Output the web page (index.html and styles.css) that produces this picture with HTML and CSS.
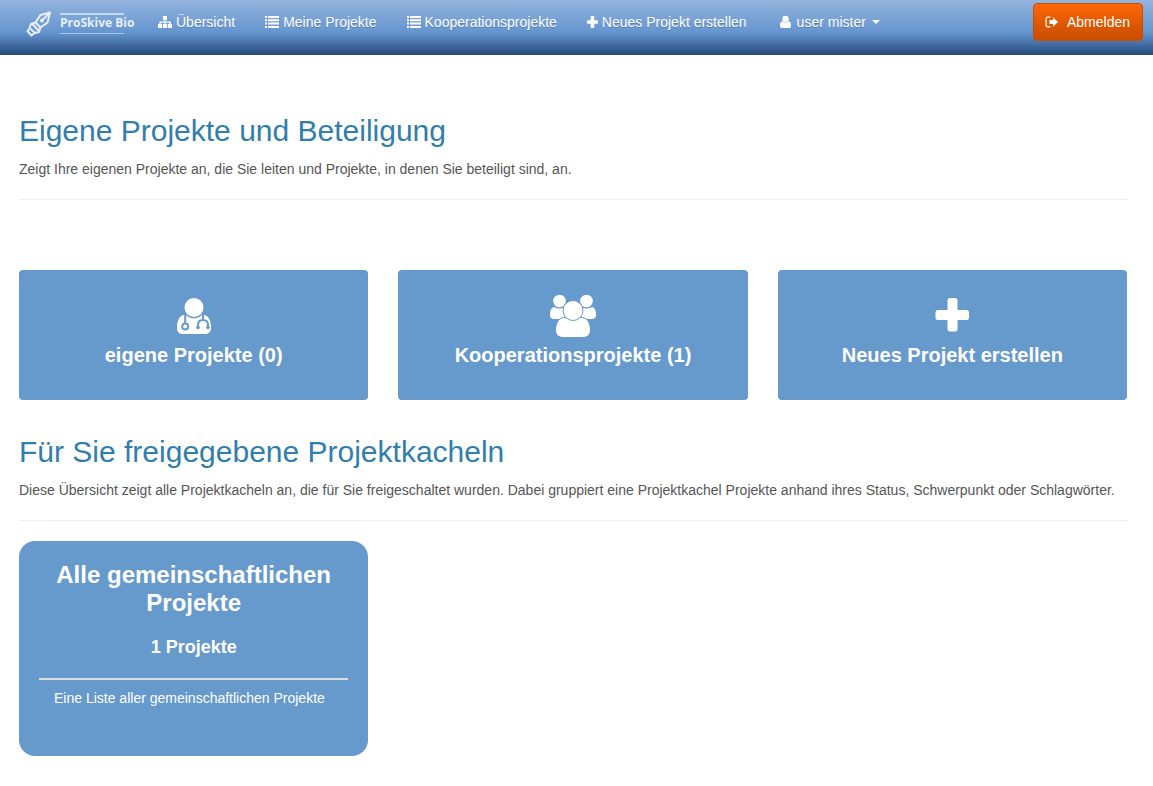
FILE: index.html
```html
<!DOCTYPE html>
<html lang="de">
<head>
<meta charset="utf-8">
<meta name="viewport" content="width=device-width, initial-scale=1">
<title>ProSkive Bio</title>
<link rel="stylesheet" href="styles.css">
</head>
<body>
<header class="navbar">
  <a class="brand" href="#">
    <svg class="brand-mark" viewBox="0 0 26 26" aria-hidden="true">
      <path d="M24 1.500 14.500 4 9.500 11.500 14.500 16.500 21.500 11.500Z M24 1.500 16.500 9 M9.500 11.500 5 13 3.500 17 9 22 13 21 14.500 16.500 M6.500 13 12.500 19.500 M3.500 17.500 1.500 20 5.500 24.500 8.500 22"/>
      <circle cx="16" cy="9.500" r="1"/>
    </svg>
    <span class="brand-name">ProSkive Bio</span>
  </a>
  <nav class="menu">
    <a href="#">
      <svg class="icon" viewBox="0 0 14 14" aria-hidden="true"><path d="M5 1h4v4H7.500v1.500H12q.8 0 .8.800V9H14v4H9.800V9h1.500V7.700H7.500V9H9v4H5V9h1.500V7.700H2.700V9h1.500v4H0V9h1.400V7.300q0-.8.800-.8h4.300V5H5z"/></svg>
      <span>Übersicht</span>
    </a>
    <a href="#">
      <svg class="icon" viewBox="0 0 14 14" aria-hidden="true"><path d="M0 1h2v2H0zM3 1h11v2H3zM0 4.300h2v2H0zM3 4.300h11v2H3zM0 7.600h2v2H0zM3 7.600h11v2H3zM0 10.900h2v2H0zM3 10.900h11v2H3z"/></svg>
      <span>Meine Projekte</span>
    </a>
    <a href="#">
      <svg class="icon" viewBox="0 0 14 14" aria-hidden="true"><path d="M0 1h2v2H0zM3 1h11v2H3zM0 4.300h2v2H0zM3 4.300h11v2H3zM0 7.600h2v2H0zM3 7.600h11v2H3zM0 10.900h2v2H0zM3 10.900h11v2H3z"/></svg>
      <span>Kooperationsprojekte</span>
    </a>
    <a href="#">
      <svg class="icon icon-narrow" viewBox="0 0 11 14" aria-hidden="true"><path d="M4.500 1h2q.8 0 .8.800v3.400h2.900q.8 0 .8.800v2q0 .8-.8.800H7.300v3.400q0 .8-.8.800h-2q-.8 0-.8-.8V8.800H.8Q0 8.800 0 8V6q0-.8.800-.8h2.900V1.800q0-.8.800-.8z"/></svg>
      <span>Neues Projekt erstellen</span>
    </a>
    <a class="user" href="#">
      <svg class="icon icon-narrow" viewBox="0 0 11 14" aria-hidden="true"><circle cx="5.500" cy="4" r="3.200"/><path d="M2.400 6.200Q5.500 9 8.600 6.200C10.500 6.500 11 8.500 11 10.500 11 12.200 10.200 13 9 13H2C.8 13 0 12.200 0 10.500 0 8.500.5 6.500 2.400 6.200z"/></svg>
      <span>user mister</span>
      <span class="caret"></span>
    </a>
  </nav>
  <button class="logout" type="button">
    <svg class="icon" viewBox="0 0 14 14" aria-hidden="true"><path d="M5.500 1.500v1.200H3Q1.700 2.700 1.700 4v6q0 1.300 1.300 1.300h2.500v1.200H3Q.5 12.500.5 10V4Q.5 1.500 3 1.500z"/><path d="M4.500 5H8V2.200L13 7l-5 4.800V9H4.500z"/></svg>
    <span>Abmelden</span>
  </button>
</header>

<main class="content">
  <section>
    <h1 class="heading">Eigene Projekte und Beteiligung</h1>
    <p class="lead">Zeigt Ihre eigenen Projekte an, die Sie leiten und Projekte, in denen Sie beteiligt sind, an.</p>
    <hr class="rule">
    <div class="grid actions">
      <a class="tile" href="#">
        <svg class="tile-icon" viewBox="0 0 50 50" aria-hidden="true">
          <path d="M15 25C9.500 26 8 32 8 38 8 42 10.500 44 14 44H36C39.500 44 42 42 42 38 42 32 40.500 26 35 25L32 23H18z"/>
          <circle class="cut" cx="25" cy="17.500" r="10.800"/>
          <circle cx="25" cy="17.500" r="9.500"/>
          <path class="tube" d="M16.200 24v9M34 24v6M29 38v-3q0-5 5-5t5 5v3"/>
          <circle class="tube" cx="16.200" cy="36.500" r="3"/>
          <circle class="cut" cx="29" cy="37.500" r="1.800"/><circle class="cut" cx="39" cy="37.500" r="1.800"/>
        </svg>
        <span>eigene Projekte (0)</span>
      </a>
      <a class="tile" href="#">
        <svg class="tile-icon" viewBox="0 0 50 50" aria-hidden="true">
          <circle cx="11.500" cy="11" r="6.300"/><circle cx="38.500" cy="11" r="6.300"/>
          <path d="M6 17Q11.500 20 17 17L20 29H6Q2 29 2 25 2 17.500 6 17zM44 17Q38.500 20 33 17L30 29H44Q48 29 48 25 48 17.500 44 17z"/>
          <path class="outline" d="M15.500 27.500C10 28 7.500 34.500 7.500 40 7.500 44.500 10.500 47.500 15 47.500H35C39.500 47.500 42.500 44.500 42.500 40 42.500 34.500 40 28 34.500 27.500z"/>
          <circle class="outline" cx="25" cy="20.500" r="10"/>
        </svg>
        <span>Kooperationsprojekte (1)</span>
      </a>
      <a class="tile" href="#">
        <svg class="tile-icon" viewBox="0 0 50 50" aria-hidden="true"><path d="M23 8h5q2.500 0 2.500 2.500V20h9q2.500 0 2.500 2.500v5q0 2.500-2.500 2.500h-9v9q0 2.500-2.500 2.500h-5q-2.500 0-2.500-2.500v-9h-9.500Q8.500 30 8.500 27.500v-5Q8.500 20 11 20h9.500v-9.500Q20.500 8 23 8z"/></svg>
        <span>Neues Projekt erstellen</span>
      </a>
    </div>
  </section>

  <section>
    <h2 class="heading">Für Sie freigegebene Projektkacheln</h2>
    <p class="lead">Diese Übersicht zeigt alle Projektkacheln an, die für Sie freigeschaltet wurden. Dabei gruppiert eine Projektkachel Projekte anhand ihres Status, Schwerpunkt oder Schlagwörter.</p>
    <hr class="rule">
    <div class="grid">
      <a class="card" href="#">
        <h3 class="card-title">Alle gemeinschaftlichen Projekte</h3>
        <p class="card-count">1 Projekte</p>
        <p class="card-text">Eine Liste aller gemeinschaftlichen Projekte</p>
      </a>
    </div>
  </section>
</main>
</body>
</html>
```
FILE: styles.css
```css
* { box-sizing: border-box; }

body {
  margin: 0;
  background: #fff;
  color: #555;
  font: 14px/20px "Liberation Sans", Arial, sans-serif;
}

a { color: inherit; text-decoration: none; }

.navbar {
  display: flex;
  align-items: flex-start;
  min-height: 55px;
  padding: 3px 10px 0 26px;
  background: linear-gradient(#94b4de, #6494ce 60%, #26497b);
  color: #fff;
}

.brand {
  display: flex;
  gap: 8px;
  width: 132px;
  padding-top: 8px;
}

.brand-mark {
  width: 26px;
  height: 26px;
  fill: none;
  stroke: #e6effa;
  stroke-width: 2;
  stroke-linejoin: round;
}

.brand-name {
  height: 21px;
  margin-top: 2px;
  background:
    linear-gradient(#c4d8f0, #c4d8f0) 0 0 / 64px 2px no-repeat,
    linear-gradient(#a9c4e8, #a9c4e8) 0 100% / 64px 1px no-repeat;
  font: bold 12px/20px "Open Sans", sans-serif;
  color: #e6effa;
  white-space: nowrap;
}

.menu {
  display: flex;
  gap: 30px;
  padding-top: 9px;
  white-space: nowrap;
  text-shadow: 0 1px 0 rgba(0, 0, 0, 0.2);
}

.menu a {
  display: flex;
  align-items: center;
  gap: 4px;
}

.menu .user {
  gap: 6px;
  padding-left: 3px;
}

.icon {
  width: 14px;
  height: 14px;
  fill: #fff;
}

.icon-narrow { width: 11px; }

.caret {
  border-top: 4px solid #fff;
  border-right: 4px solid transparent;
  border-left: 4px solid transparent;
}

.logout {
  display: flex;
  align-items: center;
  gap: 8px;
  margin-left: auto;
  padding: 8px 12px 8px 11px;
  border: 1px solid #c64d05;
  border-radius: 4px;
  background: linear-gradient(#ff6707, #dd5600 60%, #c94e00);
  color: #fff;
  font: inherit;
}

.content { padding: 58px 26px 30px 19px; }

.heading {
  margin: 0 0 10px;
  color: #317eac;
  font-size: 30px;
  font-weight: normal;
  line-height: 36px;
}

.lead { margin: 0; }

.rule {
  margin: 20px 0;
  border: 0;
  border-top: 1px solid #eee;
}

.grid {
  display: grid;
  grid-template-columns: repeat(3, 1fr);
  gap: 30px;
}

.actions { margin: 70px 0 34px; }

.tile {
  display: flex;
  flex-direction: column;
  align-items: center;
  padding: 20px 20px 30px;
  border-radius: 4px;
  background: #69c;
  color: #fff;
  font-size: 20px;
  font-weight: bold;
  line-height: 30px;
}

.tile-icon {
  width: 50px;
  height: 50px;
  fill: #fff;
}

.cut { fill: #69c; }
.tube { fill: none; stroke: #69c; stroke-width: 2; }
.outline { stroke: #69c; stroke-width: 1; }

.card {
  min-height: 215px;
  padding: 20px;
  border-radius: 16px;
  background: #69c;
  color: #fff;
}

.card-title {
  margin: 0;
  font-size: 24px;
  line-height: 28px;
  text-align: center;
}

.card-count {
  margin: 20px 0 21px;
  font-size: 18px;
  font-weight: bold;
  text-align: center;
}

.card-text {
  margin: 0;
  padding: 8px 15px;
  border-top: 2px solid #ddd;
}
```
